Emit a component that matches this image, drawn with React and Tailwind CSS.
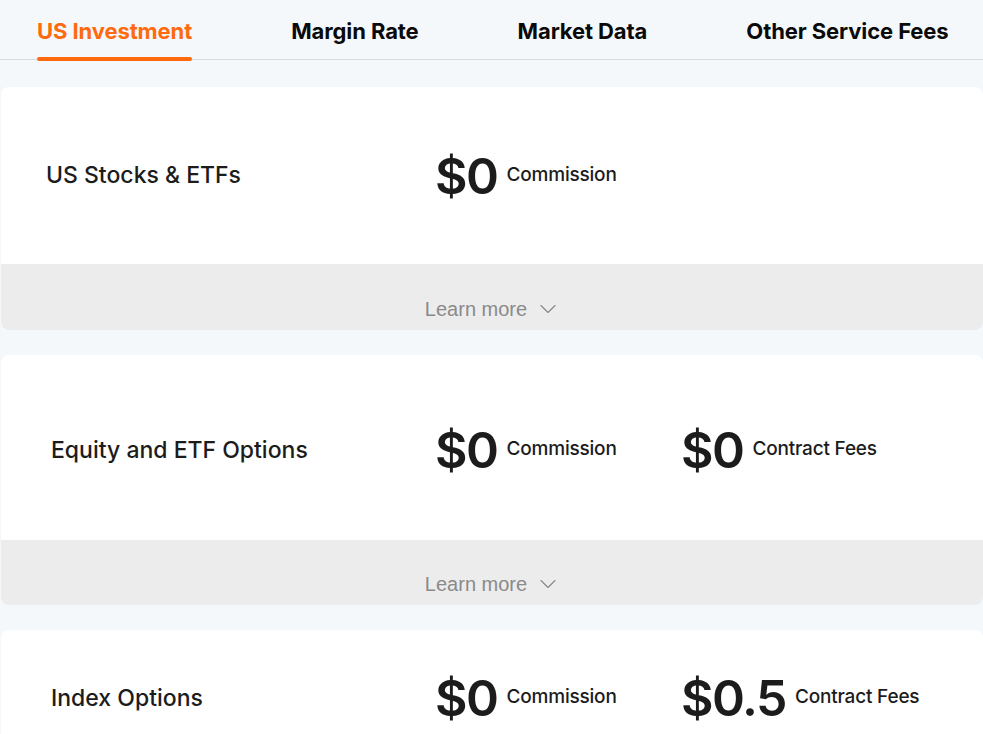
import { ChevronDown } from "lucide-react";

const tabs = ["US Investment", "Margin Rate", "Market Data", "Other Service Fees"];

function Price({ value, label, className = "" }) {
    return (
        <div className={`flex items-center ${className}`}>
            <span className="text-[50px] leading-none font-semibold tracking-[-1.5px] text-[#1c1c1c]">{value}</span>
            <span className="ml-[9px] text-[19px] font-medium tracking-[-0.2px] text-[#1c1c1c] -mt-[1px]">{label}</span>
        </div>
    );
}

function LearnMore({ height }) {
    return (
        <div className={`bg-[#ececec] rounded-b-[6px] flex justify-center items-end pb-[6px] ${height}`}>
            <div className="flex items-center text-[#8a8a8a] ml-[3px]" style={{ fontFamily: '"Liberation Sans", Arial, sans-serif' }}>
                <span className="text-[20px]">Learn more</span>
                <ChevronDown className="ml-[7px] w-[28px] h-[28px]" strokeWidth={1} />
            </div>
        </div>
    );
}

export default function App() {
    return (
        <div className="min-h-screen bg-[#f5f8fb] overflow-hidden" style={{ fontFamily: "Inter, 'Noto Sans', sans-serif" }}>
            {/* Tabs */}
            <div className="h-[60px] border-b border-[#d9dcdf] flex pl-[37px] gap-[99px]">
                {tabs.map((t, i) => (
                    <div key={t} className="relative flex items-center pt-[4px]">
                        <span className={`text-[22px] font-bold tracking-[-0.1px] ${i === 0 ? "text-[#ff6a0e]" : "text-[#0a0a0a]"}`}>{t}</span>
                        {i === 0 && <div className="absolute left-0 right-0 bottom-[-2px] h-[4px] rounded-full bg-[#ff6a0e]" />}
                    </div>
                ))}
            </div>

            <div className="pl-[1px] pt-[27px] flex flex-col gap-[25px]">
                {/* Card 1 */}
                <div className="rounded-[8px] overflow-hidden">
                    <div className="bg-white h-[177px] flex items-center">
                        <div className="w-[434px] pl-[45px] text-[23px] font-medium text-[#1c1c1c]">US Stocks &amp; ETFs</div>
                        <Price value="$0" label="Commission" />
                    </div>
                    <LearnMore height="h-[66px]" />
                </div>

                {/* Card 2 */}
                <div className="rounded-[8px] overflow-hidden">
                    <div className="bg-white h-[185px] flex items-center pt-[5px]">
                        <div className="w-[434px] pl-[50px] text-[23px] font-medium text-[#1c1c1c]">Equity and ETF Options</div>
                        <Price value="$0" label="Commission" className="w-[246px]" />
                        <Price value="$0" label="Contract Fees" />
                    </div>
                    <LearnMore height="h-[65px]" />
                </div>

                {/* Card 3 */}
                <div className="rounded-t-[8px] bg-white h-[200px] flex items-start pt-[43px]">
                    <div className="w-[434px] pl-[50px] text-[23px] font-medium text-[#1c1c1c] pt-[8px]">Index Options</div>
                    <Price value="$0" label="Commission" className="w-[246px]" />
                    <Price value="$0.5" label="Contract Fees" />
                </div>
            </div>
        </div>
    );
}
